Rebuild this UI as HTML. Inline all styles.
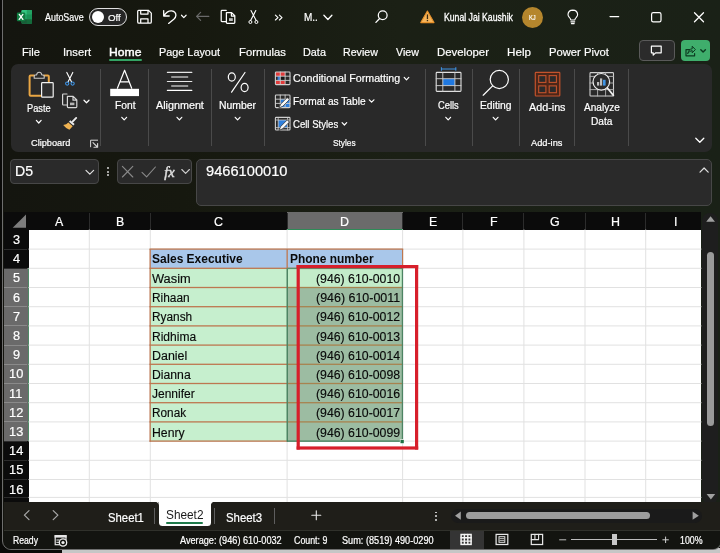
<!DOCTYPE html>
<html lang="en"><head><meta charset="utf-8"><title>Excel</title>
<style>
html,body{margin:0;padding:0;}
body{width:720px;height:553px;overflow:hidden;position:relative;background:#15160f;font-family:"Liberation Sans",sans-serif;}
#app div{position:absolute;box-sizing:border-box;}
.t{position:absolute;white-space:pre;transform-origin:0 50%;display:block;}
#ic,#un{position:absolute;left:0;top:0;}
#app #tx{position:absolute;left:0;top:0;width:720px;height:553px;will-change:transform;}
</style></head>
<body>
<div id="app">
<div style="left:0.00px;top:0.00px;width:720.00px;height:553.00px;background:#0a0a08;"></div>
<div style="left:61.80px;top:548.30px;width:658.20px;height:4.70px;background:#c6c6c6;"></div>
<div style="left:2.20px;top:-10.00px;width:719.40px;height:560.40px;background:linear-gradient(90deg,#14150f 0%,#16180f 25%,#1b2015 55%,#1a2117 100%);border:1.6px solid #6e6e6e;border-radius:0 0 9px 9px;"></div>
<div style="left:10.60px;top:64.30px;width:701.40px;height:87.30px;background:#292929;border-radius:7px;"></div>
<div style="left:100.20px;top:69.00px;width:1.00px;height:77.00px;background:#4a4a4a;"></div>
<div style="left:148.20px;top:69.00px;width:1.00px;height:77.00px;background:#4a4a4a;"></div>
<div style="left:211.20px;top:69.00px;width:1.00px;height:77.00px;background:#4a4a4a;"></div>
<div style="left:264.00px;top:69.00px;width:1.00px;height:77.00px;background:#4a4a4a;"></div>
<div style="left:424.50px;top:69.00px;width:1.00px;height:77.00px;background:#4a4a4a;"></div>
<div style="left:472.00px;top:69.00px;width:1.00px;height:77.00px;background:#4a4a4a;"></div>
<div style="left:519.00px;top:69.00px;width:1.00px;height:77.00px;background:#4a4a4a;"></div>
<div style="left:574.00px;top:69.00px;width:1.00px;height:77.00px;background:#4a4a4a;"></div>
<div style="left:628.20px;top:69.00px;width:1.00px;height:77.00px;background:#4a4a4a;"></div>
<div style="left:88.90px;top:8.20px;width:38.30px;height:17.60px;background:#262626;border:1px solid #e0e0e0;border-radius:9px;"></div>
<div style="left:91.80px;top:10.90px;width:11.90px;height:12.00px;background:#fff;border-radius:7px;"></div>
<div style="left:522.00px;top:6.50px;width:21.00px;height:21.00px;background:#b5862d;border-radius:11px;"></div>
<div style="left:109.00px;top:59.30px;width:33.00px;height:2.00px;background:#33a364;border-radius:1px;"></div>
<div style="left:638.70px;top:40.00px;width:36.30px;height:21.00px;background:#2b2b2b;border:1px solid #5a5a5a;border-radius:4px;"></div>
<div style="left:681.00px;top:40.00px;width:28.50px;height:21.00px;background:#3fae6c;border-radius:4px;"></div>
<div style="left:10.30px;top:159.00px;width:89.10px;height:25.00px;background:#2a2a2a;border:1px solid #474747;border-radius:4px;"></div>
<div style="left:117.20px;top:159.00px;width:74.50px;height:25.00px;background:#2a2a2a;border:1px solid #474747;border-radius:4px;"></div>
<div style="left:195.60px;top:159.00px;width:516.30px;height:47.00px;background:#2a2a2a;border:1px solid #474747;border-radius:5px;"></div>
<div style="left:107.40px;top:166.90px;width:2.00px;height:2.00px;background:#d6d6d6;border-radius:1px;"></div>
<div style="left:107.40px;top:170.50px;width:2.00px;height:2.00px;background:#d6d6d6;border-radius:1px;"></div>
<div style="left:107.40px;top:174.10px;width:2.00px;height:2.00px;background:#d6d6d6;border-radius:1px;"></div>
<div style="left:4.00px;top:211.70px;width:697.40px;height:290.30px;background:#0b0b0b;"></div>
<div style="left:28.50px;top:229.50px;width:672.90px;height:272.50px;background:#ffffff;"></div>
<div style="left:287.10px;top:211.70px;width:115.50px;height:17.90px;background:#6b6b6b;border-bottom:1.5px solid #2e8b57;"></div>
<div style="left:88.80px;top:213.00px;width:1.00px;height:16.00px;background:#2c2c2c;"></div>
<div style="left:149.80px;top:213.00px;width:1.00px;height:16.00px;background:#2c2c2c;"></div>
<div style="left:286.60px;top:213.00px;width:1.00px;height:16.00px;background:#2c2c2c;"></div>
<div style="left:402.10px;top:213.00px;width:1.00px;height:16.00px;background:#2c2c2c;"></div>
<div style="left:462.40px;top:213.00px;width:1.00px;height:16.00px;background:#2c2c2c;"></div>
<div style="left:523.40px;top:213.00px;width:1.00px;height:16.00px;background:#2c2c2c;"></div>
<div style="left:584.50px;top:213.00px;width:1.00px;height:16.00px;background:#2c2c2c;"></div>
<div style="left:645.20px;top:213.00px;width:1.00px;height:16.00px;background:#2c2c2c;"></div>
<div style="left:4.00px;top:268.30px;width:24.50px;height:172.80px;background:#6a6a6a;border-right:1.5px solid #4f8a66;"></div>
<div style="left:4.00px;top:248.60px;width:23.00px;height:1.00px;background:#2c2c2c;"></div>
<div style="left:4.00px;top:267.80px;width:23.00px;height:1.00px;background:#2c2c2c;"></div>
<div style="left:4.00px;top:287.00px;width:23.00px;height:1.00px;background:#8a8a8a;"></div>
<div style="left:4.00px;top:306.20px;width:23.00px;height:1.00px;background:#8a8a8a;"></div>
<div style="left:4.00px;top:325.40px;width:23.00px;height:1.00px;background:#8a8a8a;"></div>
<div style="left:4.00px;top:344.60px;width:23.00px;height:1.00px;background:#8a8a8a;"></div>
<div style="left:4.00px;top:363.80px;width:23.00px;height:1.00px;background:#8a8a8a;"></div>
<div style="left:4.00px;top:383.00px;width:23.00px;height:1.00px;background:#8a8a8a;"></div>
<div style="left:4.00px;top:402.20px;width:23.00px;height:1.00px;background:#8a8a8a;"></div>
<div style="left:4.00px;top:421.40px;width:23.00px;height:1.00px;background:#8a8a8a;"></div>
<div style="left:4.00px;top:440.60px;width:23.00px;height:1.00px;background:#2c2c2c;"></div>
<div style="left:4.00px;top:459.80px;width:23.00px;height:1.00px;background:#2c2c2c;"></div>
<div style="left:4.00px;top:479.00px;width:23.00px;height:1.00px;background:#2c2c2c;"></div>
<div style="left:4.00px;top:496.90px;width:24.50px;height:1.00px;background:#2c2c2c;"></div>
<div style="left:702.20px;top:212.50px;width:16.20px;height:291.50px;background:#1e1e1e;border-radius:8px;"></div>
<div style="left:707.10px;top:252.30px;width:7.20px;height:174.00px;background:#9a9a9a;border-radius:4px;"></div>
<div style="left:4.00px;top:502.00px;width:716.00px;height:28.00px;background:#1f1e19;"></div>
<div style="left:158.50px;top:501.70px;width:52.50px;height:24.60px;background:#ffffff;border-radius:0 0 3.5px 3.5px;"></div>
<div style="left:165.60px;top:522.30px;width:37.90px;height:2.00px;background:#1f7a4a;border-radius:1px;"></div>
<div style="left:154.40px;top:507.50px;width:0.80px;height:16.30px;background:#5e5e5e;"></div>
<div style="left:214.40px;top:507.50px;width:0.80px;height:16.30px;background:#5e5e5e;"></div>
<div style="left:273.60px;top:507.50px;width:0.80px;height:16.30px;background:#5e5e5e;"></div>
<div style="left:434.90px;top:511.60px;width:1.80px;height:1.80px;background:#e0e0e0;border-radius:1px;"></div>
<div style="left:434.90px;top:515.30px;width:1.80px;height:1.80px;background:#e0e0e0;border-radius:1px;"></div>
<div style="left:434.90px;top:519.00px;width:1.80px;height:1.80px;background:#e0e0e0;border-radius:1px;"></div>
<div style="left:450.50px;top:508.50px;width:251.00px;height:14.30px;background:#1a1a1a;border-radius:7px;"></div>
<div style="left:465.70px;top:511.80px;width:184.30px;height:7.60px;background:#9d9d9d;border-radius:4px;"></div>
<div style="left:3.80px;top:529.80px;width:716.20px;height:19.00px;background:#131410;border-top:1px solid #30312b;border-radius:0 0 7.5px 7.5px;"></div>
<div style="left:450.20px;top:530.60px;width:33.60px;height:18.20px;background:#343434;"></div>
<div style="left:570.70px;top:539.30px;width:86.30px;height:1.00px;background:#bdbdbd;"></div>
<div style="left:612.30px;top:534.30px;width:4.40px;height:10.90px;background:#c8c8c8;"></div>
<svg id="un" width="720" height="553" viewBox="0 0 720 553">
<rect x="88.80" y="229.50" width="1.00" height="272.50" fill="#e1e1e1"/>
<rect x="149.80" y="229.50" width="1.00" height="272.50" fill="#e1e1e1"/>
<rect x="286.60" y="229.50" width="1.00" height="272.50" fill="#e1e1e1"/>
<rect x="402.10" y="229.50" width="1.00" height="272.50" fill="#e1e1e1"/>
<rect x="462.40" y="229.50" width="1.00" height="272.50" fill="#e1e1e1"/>
<rect x="523.40" y="229.50" width="1.00" height="272.50" fill="#e1e1e1"/>
<rect x="584.50" y="229.50" width="1.00" height="272.50" fill="#e1e1e1"/>
<rect x="645.20" y="229.50" width="1.00" height="272.50" fill="#e1e1e1"/>
<rect x="28.50" y="248.60" width="672.90" height="1.00" fill="#e1e1e1"/>
<rect x="28.50" y="267.80" width="672.90" height="1.00" fill="#e1e1e1"/>
<rect x="28.50" y="287.00" width="672.90" height="1.00" fill="#e1e1e1"/>
<rect x="28.50" y="306.20" width="672.90" height="1.00" fill="#e1e1e1"/>
<rect x="28.50" y="325.40" width="672.90" height="1.00" fill="#e1e1e1"/>
<rect x="28.50" y="344.60" width="672.90" height="1.00" fill="#e1e1e1"/>
<rect x="28.50" y="363.80" width="672.90" height="1.00" fill="#e1e1e1"/>
<rect x="28.50" y="383.00" width="672.90" height="1.00" fill="#e1e1e1"/>
<rect x="28.50" y="402.20" width="672.90" height="1.00" fill="#e1e1e1"/>
<rect x="28.50" y="421.40" width="672.90" height="1.00" fill="#e1e1e1"/>
<rect x="28.50" y="440.60" width="672.90" height="1.00" fill="#e1e1e1"/>
<rect x="28.50" y="459.80" width="672.90" height="1.00" fill="#e1e1e1"/>
<rect x="28.50" y="479.00" width="672.90" height="1.00" fill="#e1e1e1"/>
<rect x="28.50" y="496.90" width="672.90" height="1.00" fill="#e1e1e1"/>
<rect x="150.30" y="249.10" width="136.80" height="19.20" fill="#a9c7ea"/>
<rect x="287.10" y="249.10" width="115.50" height="19.20" fill="#a9c7ea"/>
<rect x="150.30" y="268.30" width="136.80" height="172.80" fill="#c6efce"/>
<rect x="287.10" y="268.30" width="115.50" height="19.20" fill="#c3ecc9"/>
<rect x="287.10" y="287.50" width="115.50" height="153.60" fill="#9cbca2"/>
<rect x="149.50" y="248.45" width="253.70" height="1.30" fill="#bd7750"/>
<rect x="149.50" y="267.65" width="253.70" height="1.30" fill="#bd7750"/>
<rect x="149.50" y="286.85" width="137.60" height="1.30" fill="#bd7750"/>
<rect x="287.10" y="286.85" width="115.50" height="1.30" fill="#a8834f"/>
<rect x="149.50" y="306.05" width="137.60" height="1.30" fill="#bd7750"/>
<rect x="287.10" y="306.05" width="115.50" height="1.30" fill="#a8834f"/>
<rect x="149.50" y="325.25" width="137.60" height="1.30" fill="#bd7750"/>
<rect x="287.10" y="325.25" width="115.50" height="1.30" fill="#a8834f"/>
<rect x="149.50" y="344.45" width="137.60" height="1.30" fill="#bd7750"/>
<rect x="287.10" y="344.45" width="115.50" height="1.30" fill="#a8834f"/>
<rect x="149.50" y="363.65" width="137.60" height="1.30" fill="#bd7750"/>
<rect x="287.10" y="363.65" width="115.50" height="1.30" fill="#a8834f"/>
<rect x="149.50" y="382.85" width="137.60" height="1.30" fill="#bd7750"/>
<rect x="287.10" y="382.85" width="115.50" height="1.30" fill="#a8834f"/>
<rect x="149.50" y="402.05" width="137.60" height="1.30" fill="#bd7750"/>
<rect x="287.10" y="402.05" width="115.50" height="1.30" fill="#a8834f"/>
<rect x="149.50" y="421.25" width="137.60" height="1.30" fill="#bd7750"/>
<rect x="287.10" y="421.25" width="115.50" height="1.30" fill="#a8834f"/>
<rect x="149.50" y="440.45" width="137.60" height="1.30" fill="#bd7750"/>
<rect x="149.50" y="249.10" width="1.30" height="192.65" fill="#bd7750"/>
<rect x="286.50" y="249.10" width="1.30" height="19.20" fill="#bd7750"/>
<rect x="402.00" y="249.10" width="1.20" height="19.20" fill="#bd7750"/>
<rect x="286.50" y="268.30" width="1.50" height="173.40" fill="#4d8463"/>
<rect x="401.80" y="268.30" width="1.30" height="170.80" fill="#4d8463"/>
<rect x="287.10" y="267.80" width="115.50" height="1.30" fill="#5c8f6e"/>
<rect x="287.10" y="440.50" width="112.90" height="1.30" fill="#3f7d59"/>
<rect x="399.90" y="439.30" width="3.90" height="3.90" fill="#f4f4f4"/>
<rect x="400.50" y="439.90" width="3.30" height="3.30" fill="#1e6f42"/>
<rect x="296.60" y="265.00" width="121.60" height="3.20" fill="#d71f2b"/>
<rect x="296.60" y="446.40" width="121.60" height="3.20" fill="#d71f2b"/>
<rect x="296.60" y="265.00" width="3.20" height="184.60" fill="#d71f2b"/>
<rect x="415.00" y="265.00" width="3.20" height="184.60" fill="#d71f2b"/>
</svg>
<div id="tx">
<span class="t" style="left:45.25px;top:12px;font-size:10.2px;line-height:11px;color:#fff;transform:scaleX(0.8754);-webkit-text-stroke:0.2px #fff;">AutoSave</span>
<span class="t" style="left:108.40px;top:12px;font-size:9.6px;line-height:11px;color:#fff;transform:scaleX(1.0101);-webkit-text-stroke:0.2px #fff;">Off</span>
<span class="t" style="left:304.40px;top:12px;font-size:10.4px;line-height:11px;color:#fff;transform:scaleX(0.9615);-webkit-text-stroke:0.2px #fff;">M..</span>
<span class="t" style="left:444.10px;top:12px;font-size:10.2px;line-height:11px;color:#fff;transform:scaleX(0.8511);-webkit-text-stroke:0.3px #fff;">Kunal Jai Kaushik</span>
<span class="t" style="left:529.20px;top:13px;font-size:7.7px;line-height:9px;color:#fff;transform:scaleX(0.7437);-webkit-text-stroke:0.2px #fff;">KJ</span>
<span class="t" style="left:22.00px;top:45px;font-size:11.8px;line-height:14px;color:#fff;transform:scaleX(0.9475);-webkit-text-stroke:0.2px #fff;">File</span>
<span class="t" style="left:63.00px;top:45px;font-size:11.8px;line-height:14px;color:#fff;transform:scaleX(0.9492);-webkit-text-stroke:0.2px #fff;">Insert</span>
<span class="t" style="left:109.00px;top:45px;font-size:11.8px;line-height:14px;color:#fff;transform:scaleX(1.0315);-webkit-text-stroke:0.45px #fff;">Home</span>
<span class="t" style="left:159.00px;top:45px;font-size:11.8px;line-height:14px;color:#fff;transform:scaleX(0.9198);-webkit-text-stroke:0.2px #fff;">Page Layout</span>
<span class="t" style="left:239.00px;top:45px;font-size:11.8px;line-height:14px;color:#fff;transform:scaleX(0.9552);-webkit-text-stroke:0.2px #fff;">Formulas</span>
<span class="t" style="left:303.00px;top:45px;font-size:11.8px;line-height:14px;color:#fff;transform:scaleX(0.9194);-webkit-text-stroke:0.2px #fff;">Data</span>
<span class="t" style="left:343.00px;top:45px;font-size:11.8px;line-height:14px;color:#fff;transform:scaleX(0.9016);-webkit-text-stroke:0.2px #fff;">Review</span>
<span class="t" style="left:396.00px;top:45px;font-size:11.8px;line-height:14px;color:#fff;transform:scaleX(0.9024);-webkit-text-stroke:0.2px #fff;">View</span>
<span class="t" style="left:437.00px;top:45px;font-size:11.8px;line-height:14px;color:#fff;transform:scaleX(0.9664);-webkit-text-stroke:0.2px #fff;">Developer</span>
<span class="t" style="left:507.00px;top:45px;font-size:11.8px;line-height:14px;color:#fff;transform:scaleX(0.9873);-webkit-text-stroke:0.2px #fff;">Help</span>
<span class="t" style="left:549.00px;top:45px;font-size:11.8px;line-height:14px;color:#fff;transform:scaleX(0.9522);-webkit-text-stroke:0.2px #fff;">Power Pivot</span>
<span class="t" style="left:27.30px;top:103px;font-size:10px;line-height:11px;color:#fff;transform:scaleX(0.9219);-webkit-text-stroke:0.2px #fff;">Paste</span>
<span class="t" style="left:30.60px;top:137px;font-size:9.4px;line-height:11px;color:#fff;transform:scaleX(0.9818);-webkit-text-stroke:0.2px #fff;">Clipboard</span>
<span class="t" style="left:114.50px;top:100px;font-size:10px;line-height:11px;color:#fff;transform:scaleX(1.0250);-webkit-text-stroke:0.2px #fff;">Font</span>
<span class="t" style="left:155.80px;top:100px;font-size:10px;line-height:11px;color:#fff;transform:scaleX(1.0764);-webkit-text-stroke:0.2px #fff;">Alignment</span>
<span class="t" style="left:219.20px;top:100px;font-size:10px;line-height:11px;color:#fff;transform:scaleX(1.0421);-webkit-text-stroke:0.2px #fff;">Number</span>
<span class="t" style="left:293.00px;top:73px;font-size:10.4px;line-height:11px;color:#fff;transform:scaleX(1.0256);-webkit-text-stroke:0.2px #fff;">Conditional Formatting</span>
<span class="t" style="left:293.00px;top:96px;font-size:10.4px;line-height:11px;color:#fff;transform:scaleX(0.9763);-webkit-text-stroke:0.2px #fff;">Format as Table</span>
<span class="t" style="left:293.00px;top:119px;font-size:10.4px;line-height:11px;color:#fff;transform:scaleX(0.9208);-webkit-text-stroke:0.2px #fff;">Cell Styles</span>
<span class="t" style="left:333.00px;top:137px;font-size:9.4px;line-height:11px;color:#fff;transform:scaleX(0.8878);-webkit-text-stroke:0.2px #fff;">Styles</span>
<span class="t" style="left:438.00px;top:100px;font-size:10px;line-height:11px;color:#fff;transform:scaleX(0.9324);-webkit-text-stroke:0.2px #fff;">Cells</span>
<span class="t" style="left:479.50px;top:100px;font-size:10px;line-height:11px;color:#fff;transform:scaleX(1.0294);-webkit-text-stroke:0.2px #fff;">Editing</span>
<span class="t" style="left:529.00px;top:102px;font-size:10px;line-height:11px;color:#fff;transform:scaleX(1.0767);-webkit-text-stroke:0.2px #fff;">Add-ins</span>
<span class="t" style="left:531.00px;top:137px;font-size:9.4px;line-height:11px;color:#fff;transform:scaleX(0.9885);-webkit-text-stroke:0.2px #fff;">Add-ins</span>
<span class="t" style="left:583.70px;top:102px;font-size:10px;line-height:11px;color:#fff;transform:scaleX(1.0056);-webkit-text-stroke:0.2px #fff;">Analyze</span>
<span class="t" style="left:591.00px;top:116px;font-size:10px;line-height:11px;color:#fff;transform:scaleX(1.0142);-webkit-text-stroke:0.2px #fff;">Data</span>
<span class="t" style="left:15.30px;top:163px;font-size:14.5px;line-height:16px;color:#fff;transform:scaleX(0.9698);-webkit-text-stroke:0.2px #fff;">D5</span>
<span class="t" style="left:164.2px;top:162.5px;font-size:14.5px;line-height:18px;color:#dcdcdc;font-family:'Liberation Serif',serif;font-style:italic;-webkit-text-stroke:0.5px #dcdcdc;">fx</span>
<span class="t" style="left:206.00px;top:163px;font-size:14.5px;line-height:16px;color:#fff;transform:scaleX(1.0109);-webkit-text-stroke:0.2px #fff;">9466100010</span>
<span class="t" style="left:54.76px;top:214px;font-size:12.8px;line-height:15px;color:#fff;transform:scaleX(0.9657);-webkit-text-stroke:0.2px #fff;">A</span>
<span class="t" style="left:115.66px;top:214px;font-size:12.8px;line-height:15px;color:#fff;transform:scaleX(0.9657);-webkit-text-stroke:0.2px #fff;">B</span>
<span class="t" style="left:214.22px;top:214px;font-size:12.8px;line-height:15px;color:#fff;transform:scaleX(0.9729);-webkit-text-stroke:0.2px #fff;">C</span>
<span class="t" style="left:340.37px;top:214px;font-size:12.8px;line-height:15px;color:#fff;transform:scaleX(0.9729);-webkit-text-stroke:0.2px #fff;">D</span>
<span class="t" style="left:428.61px;top:214px;font-size:12.8px;line-height:15px;color:#fff;transform:scaleX(0.9657);-webkit-text-stroke:0.2px #fff;">E</span>
<span class="t" style="left:489.61px;top:214px;font-size:12.8px;line-height:15px;color:#fff;transform:scaleX(0.9712);-webkit-text-stroke:0.2px #fff;">F</span>
<span class="t" style="left:549.62px;top:214px;font-size:12.8px;line-height:15px;color:#fff;transform:scaleX(0.9673);-webkit-text-stroke:0.2px #fff;">G</span>
<span class="t" style="left:610.87px;top:214px;font-size:12.8px;line-height:15px;color:#fff;transform:scaleX(0.9729);-webkit-text-stroke:0.2px #fff;">H</span>
<span class="t" style="left:674.48px;top:214px;font-size:12.8px;line-height:15px;color:#fff;transform:scaleX(0.9624);-webkit-text-stroke:0.2px #fff;">I</span>
<span class="t" style="left:12.54px;top:232px;font-size:12.8px;line-height:15px;color:#fff;transform:scaleX(0.9930);-webkit-text-stroke:0.2px #fff;">3</span>
<span class="t" style="left:12.54px;top:251px;font-size:12.8px;line-height:15px;color:#fff;transform:scaleX(0.9930);-webkit-text-stroke:0.2px #fff;">4</span>
<span class="t" style="left:12.54px;top:270px;font-size:12.8px;line-height:15px;color:#fff;transform:scaleX(0.9930);-webkit-text-stroke:0.2px #fff;">5</span>
<span class="t" style="left:12.54px;top:290px;font-size:12.8px;line-height:15px;color:#fff;transform:scaleX(0.9930);-webkit-text-stroke:0.2px #fff;">6</span>
<span class="t" style="left:12.54px;top:309px;font-size:12.8px;line-height:15px;color:#fff;transform:scaleX(0.9930);-webkit-text-stroke:0.2px #fff;">7</span>
<span class="t" style="left:12.54px;top:328px;font-size:12.8px;line-height:15px;color:#fff;transform:scaleX(0.9930);-webkit-text-stroke:0.2px #fff;">8</span>
<span class="t" style="left:12.54px;top:347px;font-size:12.8px;line-height:15px;color:#fff;transform:scaleX(0.9930);-webkit-text-stroke:0.2px #fff;">9</span>
<span class="t" style="left:8.98px;top:366px;font-size:12.8px;line-height:15px;color:#fff;transform:scaleX(1.0020);-webkit-text-stroke:0.2px #fff;">10</span>
<span class="t" style="left:9.46px;top:386px;font-size:12.8px;line-height:15px;color:#fff;transform:scaleX(0.9980);-webkit-text-stroke:0.2px #fff;">11</span>
<span class="t" style="left:8.98px;top:405px;font-size:12.8px;line-height:15px;color:#fff;transform:scaleX(1.0020);-webkit-text-stroke:0.2px #fff;">12</span>
<span class="t" style="left:8.98px;top:424px;font-size:12.8px;line-height:15px;color:#fff;transform:scaleX(1.0020);-webkit-text-stroke:0.2px #fff;">13</span>
<span class="t" style="left:8.98px;top:443px;font-size:12.8px;line-height:15px;color:#fff;transform:scaleX(1.0020);-webkit-text-stroke:0.2px #fff;">14</span>
<span class="t" style="left:8.98px;top:462px;font-size:12.8px;line-height:15px;color:#fff;transform:scaleX(1.0020);-webkit-text-stroke:0.2px #fff;">15</span>
<span class="t" style="left:8.98px;top:482px;font-size:12.8px;line-height:15px;color:#fff;transform:scaleX(1.0020);-webkit-text-stroke:0.2px #fff;">16</span>
<span class="t" style="left:152.30px;top:252px;font-size:12.4px;line-height:14px;color:#0a0a0a;font-weight:700;transform:scaleX(0.9665);">Sales Executive</span>
<span class="t" style="left:290.20px;top:252px;font-size:12.4px;line-height:14px;color:#0a0a0a;font-weight:700;transform:scaleX(0.9631);">Phone number</span>
<span class="t" style="left:152.30px;top:272px;font-size:12.5px;line-height:14px;color:#0a0a0a;transform:scaleX(1.0252);-webkit-text-stroke:0.15px #0a0a0a;">Wasim</span>
<span class="t" style="left:315.70px;top:272px;font-size:12.5px;line-height:14px;color:#0a0a0a;transform:scaleX(0.9836);-webkit-text-stroke:0.15px #0a0a0a;">(946) 610-0010</span>
<span class="t" style="left:152.30px;top:291px;font-size:12.5px;line-height:14px;color:#0a0a0a;transform:scaleX(0.9514);-webkit-text-stroke:0.15px #0a0a0a;">Rihaan</span>
<span class="t" style="left:315.70px;top:291px;font-size:12.5px;line-height:14px;color:#0a0a0a;transform:scaleX(0.9953);-webkit-text-stroke:0.15px #0a0a0a;">(946) 610-0011</span>
<span class="t" style="left:152.30px;top:310px;font-size:12.5px;line-height:14px;color:#0a0a0a;transform:scaleX(0.9487);-webkit-text-stroke:0.15px #0a0a0a;">Ryansh</span>
<span class="t" style="left:315.70px;top:310px;font-size:12.5px;line-height:14px;color:#0a0a0a;transform:scaleX(0.9836);-webkit-text-stroke:0.15px #0a0a0a;">(946) 610-0012</span>
<span class="t" style="left:152.30px;top:330px;font-size:12.5px;line-height:14px;color:#0a0a0a;transform:scaleX(0.9635);-webkit-text-stroke:0.15px #0a0a0a;">Ridhima</span>
<span class="t" style="left:315.70px;top:330px;font-size:12.5px;line-height:14px;color:#0a0a0a;transform:scaleX(0.9836);-webkit-text-stroke:0.15px #0a0a0a;">(946) 610-0013</span>
<span class="t" style="left:152.30px;top:349px;font-size:12.5px;line-height:14px;color:#0a0a0a;transform:scaleX(0.9951);-webkit-text-stroke:0.15px #0a0a0a;">Daniel</span>
<span class="t" style="left:315.70px;top:349px;font-size:12.5px;line-height:14px;color:#0a0a0a;transform:scaleX(0.9836);-webkit-text-stroke:0.15px #0a0a0a;">(946) 610-0014</span>
<span class="t" style="left:152.30px;top:368px;font-size:12.5px;line-height:14px;color:#0a0a0a;transform:scaleX(0.9767);-webkit-text-stroke:0.15px #0a0a0a;">Dianna</span>
<span class="t" style="left:315.70px;top:368px;font-size:12.5px;line-height:14px;color:#0a0a0a;transform:scaleX(0.9836);-webkit-text-stroke:0.15px #0a0a0a;">(946) 610-0098</span>
<span class="t" style="left:152.30px;top:387px;font-size:12.5px;line-height:14px;color:#0a0a0a;transform:scaleX(0.9596);-webkit-text-stroke:0.15px #0a0a0a;">Jennifer</span>
<span class="t" style="left:315.70px;top:387px;font-size:12.5px;line-height:14px;color:#0a0a0a;transform:scaleX(0.9836);-webkit-text-stroke:0.15px #0a0a0a;">(946) 610-0016</span>
<span class="t" style="left:152.30px;top:406px;font-size:12.5px;line-height:14px;color:#0a0a0a;transform:scaleX(0.9434);-webkit-text-stroke:0.15px #0a0a0a;">Ronak</span>
<span class="t" style="left:315.70px;top:406px;font-size:12.5px;line-height:14px;color:#0a0a0a;transform:scaleX(0.9836);-webkit-text-stroke:0.15px #0a0a0a;">(946) 610-0017</span>
<span class="t" style="left:152.30px;top:426px;font-size:12.5px;line-height:14px;color:#0a0a0a;transform:scaleX(0.9798);-webkit-text-stroke:0.15px #0a0a0a;">Henry</span>
<span class="t" style="left:315.70px;top:426px;font-size:12.5px;line-height:14px;color:#0a0a0a;transform:scaleX(0.9836);-webkit-text-stroke:0.15px #0a0a0a;">(946) 610-0099</span>
<span class="t" style="left:107.70px;top:510px;font-size:12.8px;line-height:15px;color:#fff;transform:scaleX(0.8848);-webkit-text-stroke:0.2px #fff;">Sheet1</span>
<span class="t" style="left:165.60px;top:507px;font-size:12.8px;line-height:15px;color:#1a1a1a;transform:scaleX(0.9242);">Sheet2</span>
<span class="t" style="left:226.20px;top:510px;font-size:12.8px;line-height:15px;color:#fff;transform:scaleX(0.8897);-webkit-text-stroke:0.2px #fff;">Sheet3</span>
<span class="t" style="left:13.30px;top:535px;font-size:10px;line-height:11px;color:#fff;transform:scaleX(0.8651);-webkit-text-stroke:0.2px #fff;">Ready</span>
<span class="t" style="left:180.00px;top:535px;font-size:10px;line-height:11px;color:#fff;transform:scaleX(0.9162);-webkit-text-stroke:0.2px #fff;">Average: (946) 610-0032</span>
<span class="t" style="left:294.30px;top:535px;font-size:10px;line-height:11px;color:#fff;transform:scaleX(0.8836);-webkit-text-stroke:0.2px #fff;">Count: 9</span>
<span class="t" style="left:341.70px;top:535px;font-size:10px;line-height:11px;color:#fff;transform:scaleX(0.9151);-webkit-text-stroke:0.2px #fff;">Sum: (8519) 490-0290</span>
<span class="t" style="left:680.00px;top:535px;font-size:10px;line-height:11px;color:#fff;transform:scaleX(0.8828);-webkit-text-stroke:0.2px #fff;">100%</span>
</div>
<svg id="ic" width="720" height="553" viewBox="0 0 720 553">
<rect x="21.5" y="10" width="10.5" height="13.8" rx="1.2" fill="#21a366"/>
<rect x="21.5" y="10" width="10.5" height="4.6" rx="1" fill="#33c481"/>
<rect x="21.5" y="19.2" width="10.5" height="4.6" rx="1" fill="#185c37"/>
<rect x="26.7" y="10" width="5.3" height="13.8" rx="1" fill="#107c41" opacity="0.45"/>
<rect x="16.9" y="12.5" width="8.3" height="8.8" rx="1" fill="#107c41"/>
<path d="M19.2 14.4 L22.9 19.4 M22.9 14.4 L19.2 19.4" stroke="#fff" stroke-width="1.3" fill="none" stroke-linecap="round" stroke-linejoin="round" />
<path d="M138.6 10.4 H148.6 L151.3 13.1 V21.9 Q151.3 23.2 150 23.2 H139 Q137.7 23.2 137.7 21.9 V11.3 Q137.7 10.4 138.6 10.4 Z M140.7 10.6 V14 H148 V10.6 M140.7 23 V18.8 H148 V23" stroke="#fff" stroke-width="1.25" fill="none" stroke-linecap="round" stroke-linejoin="round" />
<path d="M163.7 10.6 V16 H169.2 M163.9 15.8 Q167 10.6 171.6 10.8 Q176 11.4 175.9 15.4 Q175.8 17.4 173.8 19.2 L168.6 23.4" stroke="#fff" stroke-width="1.3" fill="none" stroke-linecap="round" stroke-linejoin="round" />
<path d="M181.50 15.25 L183.80 17.55 L186.10 15.25" stroke="#fff" stroke-width="1.2" fill="none" stroke-linecap="round" stroke-linejoin="round" />
<path d="M196.6 16.4 H208.8 M200.6 12.4 L196.6 16.4 L200.6 20.4" stroke="#6a6a6a" stroke-width="1.2" fill="none" stroke-linecap="round" stroke-linejoin="round" />
<path d="M226 21.6 H222 Q221.2 21.6 221.2 20.8 V11.2 Q221.2 10.4 222 10.4 H226.2" stroke="#fff" stroke-width="1.25" fill="none" stroke-linecap="round" stroke-linejoin="round" />
<path d="M226.4 12.6 H231.6 L234.8 15.8 V22.6 Q234.8 23.4 234 23.4 H227.2 Q226.4 23.4 226.4 22.6 Z M231.4 12.8 V16 H234.6" stroke="#fff" stroke-width="1.25" fill="none" stroke-linecap="round" stroke-linejoin="round" />
<rect x="229" y="18.2" width="3.8" height="2.8" fill="#bdbdbd"/>
<path d="M251 10.6 L256.2 20.6 M255.8 10.6 L250.6 20.6" stroke="#fff" stroke-width="1.1" fill="none" stroke-linecap="round" stroke-linejoin="round" />
<circle cx="250.4" cy="22" r="1.5" fill="none" stroke="#fff" stroke-width="1"/>
<circle cx="256.4" cy="22" r="1.5" fill="none" stroke="#fff" stroke-width="1"/>
<path d="M275.4 15.2 L278 17.6 L275.4 20 M279.4 15.2 L282 17.6 L279.4 20" stroke="#fff" stroke-width="1.15" fill="none" stroke-linecap="round" stroke-linejoin="round" />
<path d="M323.90 15.30 L327.90 19.50 L331.90 15.30" stroke="#fff" stroke-width="1.3" fill="none" stroke-linecap="round" stroke-linejoin="round" />
<circle cx="382.7" cy="15.2" r="4.4" fill="none" stroke="#fff" stroke-width="1.25"/>
<path d="M379.6 18.5 L375.9 22.4" stroke="#fff" stroke-width="1.3" fill="none" stroke-linecap="round" stroke-linejoin="round" />
<path d="M427.4 11 L434 22.6 H420.8 Z" fill="#f6b45a" stroke="#e8912a" stroke-width="1.1" stroke-linejoin="round"/>
<rect x="426.8" y="14.4" width="1.3" height="4.6" fill="#3a2a10"/><rect x="426.8" y="19.9" width="1.3" height="1.3" fill="#3a2a10"/>
<path d="M570.8 20 Q570.6 18.6 569.3 17.4 Q567.9 15.9 568 14.4 Q568.3 10.2 572.8 10.1 Q577.3 10.2 577.6 14.4 Q577.7 15.9 576.3 17.4 Q575 18.6 574.8 20 Z M570.9 21.8 H574.7 M571.4 23.6 H574.2" stroke="#fff" stroke-width="1.15" fill="none" stroke-linecap="round" stroke-linejoin="round" />
<path d="M610 16.6 H618.7" stroke="#fff" stroke-width="1.2" fill="none" stroke-linecap="round" stroke-linejoin="round" />
<rect x="651.6" y="12.6" width="9.4" height="9.2" rx="1.6" fill="none" stroke="#fff" stroke-width="1.2"/>
<path d="M694.5 12.7 L703.5 21.8 M703.5 12.7 L694.5 21.8" stroke="#fff" stroke-width="1.25" fill="none" stroke-linecap="round" stroke-linejoin="round" />
<path d="M651.4 46.2 H661.2 V52.8 H655.6 L653.2 55.2 V52.8 H651.4 Z" stroke="#fff" stroke-width="1.2" fill="none" stroke-linecap="round" stroke-linejoin="round" />
<path d="M689.5 49.6 H686 V55.8 H694.6 V53.6" stroke="#0c3a20" stroke-width="1.2" fill="none" stroke-linecap="round" stroke-linejoin="round" />
<path d="M687.8 53.4 Q688.4 49.2 692.2 48.8 V46.2 L695.4 49.6 L692.2 52.8 V50.6 Q689.6 50.6 687.8 53.4 Z" stroke="#0c3a20" stroke-width="1.0" fill="none" stroke-linecap="round" stroke-linejoin="round" />
<path d="M700.80 49.70 L703.10 52.10 L705.40 49.70" stroke="#0c3a20" stroke-width="1.4" fill="none" stroke-linecap="round" stroke-linejoin="round" />
<path d="M34 75.6 H30.6 Q29.6 75.6 29.6 76.6 V94.8 Q29.6 95.8 30.6 95.8 H40.6 M44.4 75.6 H47.8 Q48.8 75.6 48.8 76.6 V81.6" stroke="#e9a644" stroke-width="2" fill="none" stroke-linecap="round" stroke-linejoin="round" />
<path d="M34.2 78.2 V76 Q34.2 75 35.2 75 H36.6 Q37 72.2 39.2 72.2 Q41.4 72.2 41.8 75 H43.2 Q44.2 75 44.2 76 V78.2 Z" stroke="#c9c9c9" stroke-width="1.1" fill="none" stroke-linecap="round" stroke-linejoin="round" />
<rect x="41.6" y="82.6" width="11.6" height="14.6" rx="0.8" fill="#2f2f2f" stroke="#f2f2f2" stroke-width="1.2"/>
<path d="M36.35 120.40 L38.75 123.00 L41.15 120.40" stroke="#fff" stroke-width="1.2" fill="none" stroke-linecap="round" stroke-linejoin="round" />
<path d="M66.8 72.4 L71.6 82 M72.8 72.4 L68 82" stroke="#fff" stroke-width="1.1" fill="none" stroke-linecap="round" stroke-linejoin="round" />
<circle cx="67.2" cy="83.6" r="1.6" fill="none" stroke="#3f95e6" stroke-width="1.1"/>
<circle cx="72.6" cy="83.6" r="1.6" fill="none" stroke="#3f95e6" stroke-width="1.1"/>
<path d="M66.8 105 H63.4 Q62.6 105 62.6 104.2 V94.8 Q62.6 94 63.4 94 H67" stroke="#d6d6d6" stroke-width="1.2" fill="none" stroke-linecap="round" stroke-linejoin="round" />
<path d="M67.4 96.4 H73.2 L76.8 100 V106.8 Q76.8 107.6 76 107.6 H68.2 Q67.4 107.6 67.4 106.8 Z M73 96.6 V100.2 H76.6" stroke="#d6d6d6" stroke-width="1.2" fill="none" stroke-linecap="round" stroke-linejoin="round" />
<rect x="70" y="102.6" width="4.4" height="2.6" fill="#b5b5b5"/>
<path d="M84.00 100.25 L86.50 102.75 L89.00 100.25" stroke="#fff" stroke-width="1.2" fill="none" stroke-linecap="round" stroke-linejoin="round" />
<path d="M76.2 117.9 L72.6 121.6" stroke="#ececec" stroke-width="1.9" fill="none" stroke-linecap="round" stroke-linejoin="round" />
<path d="M70.3 120.2 L74.6 124 L73.3 125.5 L69 121.7 Z" fill="#ececec"/>
<path d="M68.3 122.4 L72.7 126.3 L69.4 129.8 Q66 128.4 63.2 124.9 Q66.6 124.6 68.3 122.4 Z" fill="#f0b352"/>
<path d="M97.6 140.2 H90.6 V146.8" stroke="#d8d8d8" stroke-width="1" fill="none" stroke-linecap="round" stroke-linejoin="round" />
<path d="M93 142.6 L97.4 147 M97.6 143.6 V147.2 H94" stroke="#d8d8d8" stroke-width="1.1" fill="none" stroke-linecap="round" stroke-linejoin="round" />
<path d="M117.4 88.2 L124.6 70.2 L131.7 88.2 M120.3 81.9 H128.9" stroke="#fff" stroke-width="1.2" fill="none" stroke-linecap="round" stroke-linejoin="round" />
<rect x="110.2" y="88.8" width="28.8" height="7.3" fill="#ffffff"/>
<path d="M121.80 117.30 L124.20 119.90 L126.60 117.30" stroke="#fff" stroke-width="1.2" fill="none" stroke-linecap="round" stroke-linejoin="round" />
<path d="M167.4 72.4 H191.8" stroke="#e6e6e6" stroke-width="1.15" fill="none" stroke-linecap="round" stroke-linejoin="round" />
<path d="M171.6 77 H187.8" stroke="#fff" stroke-width="1.0" fill="none" stroke-linecap="round" stroke-linejoin="round" />
<path d="M167.4 81.5 H191.8" stroke="#e6e6e6" stroke-width="1.15" fill="none" stroke-linecap="round" stroke-linejoin="round" />
<path d="M171.6 86 H187.8" stroke="#fff" stroke-width="1.0" fill="none" stroke-linecap="round" stroke-linejoin="round" />
<path d="M167.4 90.4 H191.8" stroke="#fff" stroke-width="1.15" fill="none" stroke-linecap="round" stroke-linejoin="round" />
<path d="M177.00 117.30 L179.40 119.90 L181.80 117.30" stroke="#fff" stroke-width="1.2" fill="none" stroke-linecap="round" stroke-linejoin="round" />
<ellipse cx="231.8" cy="77" rx="3.5" ry="4.2" fill="none" stroke="#fff" stroke-width="1.2"/>
<ellipse cx="244.6" cy="87.5" rx="3.5" ry="4.2" fill="none" stroke="#fff" stroke-width="1.2"/>
<path d="M245 72.5 L231.6 92.2" stroke="#fff" stroke-width="1.2" fill="none" stroke-linecap="round" stroke-linejoin="round" />
<path d="M235.20 117.30 L237.60 119.90 L240.00 117.30" stroke="#fff" stroke-width="1.2" fill="none" stroke-linecap="round" stroke-linejoin="round" />
<rect x="275.4" y="72" width="9.7" height="4.2" fill="#e23b3b"/><rect x="275.4" y="80.4" width="9.7" height="4.2" fill="#e23b3b"/><rect x="277.6" y="76.2" width="2.8" height="4.2" fill="#3a7bd5"/><rect x="280.4" y="76.2" width="4.7" height="4.2" fill="#161616"/>
<rect x="275.4" y="72" width="14.6" height="12.6" rx="0.8" fill="none" stroke="#cfcfcf" stroke-width="1.1"/>
<path d="M275.4 76.20 H290.0" stroke="#cfcfcf" stroke-width="0.9" fill="none" stroke-linecap="round" stroke-linejoin="round" />
<path d="M280.27 72 V84.6" stroke="#cfcfcf" stroke-width="0.9" fill="none" stroke-linecap="round" stroke-linejoin="round" />
<path d="M275.4 80.40 H290.0" stroke="#cfcfcf" stroke-width="0.9" fill="none" stroke-linecap="round" stroke-linejoin="round" />
<path d="M285.13 72 V84.6" stroke="#cfcfcf" stroke-width="0.9" fill="none" stroke-linecap="round" stroke-linejoin="round" />
<rect x="280.3" y="99.2" width="9.7" height="8.4" fill="#2f7fdc"/>
<rect x="275.4" y="95" width="14.6" height="12.6" rx="0.8" fill="none" stroke="#cfcfcf" stroke-width="1.1"/>
<path d="M275.4 99.20 H290.0" stroke="#cfcfcf" stroke-width="0.9" fill="none" stroke-linecap="round" stroke-linejoin="round" />
<path d="M280.27 95 V107.6" stroke="#cfcfcf" stroke-width="0.9" fill="none" stroke-linecap="round" stroke-linejoin="round" />
<path d="M275.4 103.40 H290.0" stroke="#cfcfcf" stroke-width="0.9" fill="none" stroke-linecap="round" stroke-linejoin="round" />
<path d="M285.13 95 V107.6" stroke="#cfcfcf" stroke-width="0.9" fill="none" stroke-linecap="round" stroke-linejoin="round" />
<path d="M279 107.8 L280.8 104 L287.2 97.6 L289.4 99.6 L283 106 Z" stroke="#2b2b2b" stroke-width="0.7" fill="#f8f8f8" stroke-linecap="round" stroke-linejoin="round" />
<rect x="278.2" y="120" width="9.4" height="7.6" fill="#2f7fdc"/>
<rect x="275.4" y="117.4" width="14.6" height="12.6" rx="0.8" fill="none" stroke="#cfcfcf" stroke-width="1.1"/>
<path d="M275.4 120 H290 M275.4 127.6 H290 M278.2 117.4 V130 M287.6 117.4 V130" stroke="#cfcfcf" stroke-width="0.8" fill="none" stroke-linecap="round" stroke-linejoin="round" />
<path d="M279 130.2 L280.8 126.4 L287.2 120 L289.4 122 L283 128.4 Z" stroke="#2b2b2b" stroke-width="0.7" fill="#f8f8f8" stroke-linecap="round" stroke-linejoin="round" />
<path d="M404.20 77.40 L406.50 79.80 L408.80 77.40" stroke="#fff" stroke-width="1.2" fill="none" stroke-linecap="round" stroke-linejoin="round" />
<path d="M369.30 99.80 L371.60 102.20 L373.90 99.80" stroke="#fff" stroke-width="1.2" fill="none" stroke-linecap="round" stroke-linejoin="round" />
<path d="M342.10 122.60 L344.40 125.00 L346.70 122.60" stroke="#fff" stroke-width="1.2" fill="none" stroke-linecap="round" stroke-linejoin="round" />
<path d="M441.4 69 H455.8 M441.4 67.6 V70.4 M455.8 67.6 V70.4" stroke="#3f95e6" stroke-width="1" fill="none" stroke-linecap="round" stroke-linejoin="round" />
<rect x="442.8" y="78.7" width="12.1" height="6.9" fill="#1f78e0"/>
<rect x="436.2" y="72.4" width="24.8" height="19" rx="0.8" fill="none" stroke="#e0e0e0" stroke-width="1.1"/>
<path d="M436.2 78.7 H461 M436.2 85.6 H461 M442.8 72.4 V91.4 M454.9 72.4 V91.4" stroke="#d0d0d0" stroke-width="0.9" fill="none" stroke-linecap="round" stroke-linejoin="round" />
<path d="M445.80 117.30 L448.20 119.90 L450.60 117.30" stroke="#fff" stroke-width="1.2" fill="none" stroke-linecap="round" stroke-linejoin="round" />
<circle cx="499.3" cy="79.5" r="9.1" fill="none" stroke="#fff" stroke-width="1.2"/>
<path d="M492.6 85.9 L483.2 95.2" stroke="#fff" stroke-width="1.25" fill="none" stroke-linecap="round" stroke-linejoin="round" />
<path d="M493.20 117.30 L495.60 119.90 L498.00 117.30" stroke="#fff" stroke-width="1.2" fill="none" stroke-linecap="round" stroke-linejoin="round" />
<rect x="535.3" y="72.3" width="24.5" height="23.7" rx="0.8" fill="#4d2618" stroke="#c4532c" stroke-width="1.2"/>
<rect x="538.7" y="75.6" width="7.2" height="6.8" fill="#2a2a2a" stroke="#c4532c" stroke-width="1.1"/>
<rect x="549.2" y="75.6" width="7.2" height="6.8" fill="#2a2a2a" stroke="#c4532c" stroke-width="1.1"/>
<rect x="538.7" y="85.9" width="7.2" height="6.8" fill="#2a2a2a" stroke="#c4532c" stroke-width="1.1"/>
<rect x="549.2" y="85.9" width="7.2" height="6.8" fill="#2a2a2a" stroke="#c4532c" stroke-width="1.1"/>
<rect x="590" y="72.6" width="23.5" height="23.4" rx="0.8" fill="none" stroke="#cfcfcf" stroke-width="1.1"/>
<path d="M590 76.4 H613.5 M590 83 H613.5 M590 89.6 H613.5 M597.6 72.6 V96 M605.6 72.6 V96" stroke="#b5b5b5" stroke-width="0.9" fill="none" stroke-linecap="round" stroke-linejoin="round" />
<circle cx="601.3" cy="81.8" r="8.3" fill="#2b2b2b" stroke="#f0f0f0" stroke-width="1.2"/>
<rect x="597" y="82" width="2.2" height="3.6" fill="#bdbdbd"/><rect x="600" y="78.4" width="2.2" height="7.2" fill="#bdbdbd"/><rect x="603" y="79.8" width="2.6" height="5.8" fill="#3f95e6"/>
<path d="M607.4 88 L613.4 95.4" stroke="#f0f0f0" stroke-width="1.7" fill="none" stroke-linecap="round" stroke-linejoin="round" />
<path d="M695.80 138.20 L699.80 142.20 L703.80 138.20" stroke="#fff" stroke-width="1.3" fill="none" stroke-linecap="round" stroke-linejoin="round" />
<path d="M86.00 170.30 L89.80 174.10 L93.60 170.30" stroke="#e0e0e0" stroke-width="1.2" fill="none" stroke-linecap="round" stroke-linejoin="round" />
<path d="M122.4 166.4 L132.8 177 M132.8 166.4 L122.4 177" stroke="#8a8a8a" stroke-width="1.1" fill="none" stroke-linecap="round" stroke-linejoin="round" />
<path d="M142 172.4 L146.6 176.8 L155.4 167" stroke="#8a8a8a" stroke-width="1.1" fill="none" stroke-linecap="round" stroke-linejoin="round" />
<path d="M181.80 169.50 L185.60 173.30 L189.40 169.50" stroke="#cfcfcf" stroke-width="1.1" fill="none" stroke-linecap="round" stroke-linejoin="round" />
<path d="M700 172.1 L704.1 168 L708.2 172.1" stroke="#e0e0e0" stroke-width="1.2" fill="none" stroke-linecap="round" stroke-linejoin="round" />
<path d="M26 214.4 V227.7 H12.7 Z" fill="#7d7d7d"/>
<path d="M706.2 221.8 L710.6 216.2 L715 221.8 Z" fill="#a0a0a0"/>
<path d="M706.6 494 L710.9 499.4 L715.2 494 Z" fill="#a0a0a0"/>
<path d="M460.8 511.6 V519.8 L455 515.7 Z" fill="#a0a0a0"/>
<path d="M692.6 511.6 V519.8 L698.8 515.7 Z" fill="#a0a0a0"/>
<path d="M154.6 501.7 H158.6 V505.7 Q158.6 501.9 154.6 501.7 Z" fill="#fff"/>
<path d="M215 501.7 H210.9 V505.7 Q210.9 501.9 215 501.7 Z" fill="#fff"/>
<path d="M29 510.6 L24.4 515.1 L29 519.6" stroke="#a8a8a8" stroke-width="1.25" fill="none" stroke-linecap="round" stroke-linejoin="round" />
<path d="M53.2 510.6 L57.9 515.1 L53.2 519.6" stroke="#a8a8a8" stroke-width="1.25" fill="none" stroke-linecap="round" stroke-linejoin="round" />
<path d="M311.8 515.2 H320.8 M316.3 510.7 V519.7" stroke="#e8e8e8" stroke-width="1.1" fill="none" stroke-linecap="round" stroke-linejoin="round" />
<rect x="55.2" y="535.7" width="10.8" height="9" fill="none" stroke="#e8e8e8" stroke-width="1.2"/>
<rect x="54.6" y="535.1" width="12" height="2.5" fill="#e8e8e8"/>
<path d="M56.8 540 H59.4 M56.8 542.3 H59.4" stroke="#e8e8e8" stroke-width="1" fill="none" stroke-linecap="round" stroke-linejoin="round" />
<circle cx="63" cy="542.5" r="3.7" fill="#131410" stroke="#f0f0f0" stroke-width="1.3"/><circle cx="63" cy="542.5" r="1.6" fill="#f0f0f0"/>
<rect x="461.1" y="534.5" width="10" height="9.9" fill="none" stroke="#f4f4f4" stroke-width="1.5"/>
<path d="M461 537.8 H471.2 M461 541.1 H471.2 M464.4 534.4 V544.4 M467.8 534.4 V544.4" stroke="#f4f4f4" stroke-width="1.4" fill="none" stroke-linecap="round" stroke-linejoin="round" />
<rect x="496.1" y="534.4" width="11.7" height="10.1" fill="none" stroke="#e6e6e6" stroke-width="1.25"/>
<rect x="499" y="536.7" width="5.8" height="5.6" fill="none" stroke="#e6e6e6" stroke-width="1"/>
<path d="M500 538.6 H503.8 M500 540.4 H503.8" stroke="#e6e6e6" stroke-width="0.8" fill="none" stroke-linecap="round" stroke-linejoin="round" />
<rect x="531.3" y="534.4" width="11.3" height="10.1" fill="none" stroke="#e6e6e6" stroke-width="1.25"/>
<path d="M534.9 534.4 V539.6 M538.6 534.4 V539.6 M531.3 539.6 H538.6" stroke="#e6e6e6" stroke-width="1.1" fill="none" stroke-linecap="round" stroke-linejoin="round" />
<path d="M559.6 539.8 H565.8" stroke="#bdbdbd" stroke-width="1" fill="none" stroke-linecap="round" stroke-linejoin="round" />
<path d="M662.8 539.8 H668.4 M665.6 537 V542.6" stroke="#d0d0d0" stroke-width="1" fill="none" stroke-linecap="round" stroke-linejoin="round" />
</svg>
</div>
</body></html>
